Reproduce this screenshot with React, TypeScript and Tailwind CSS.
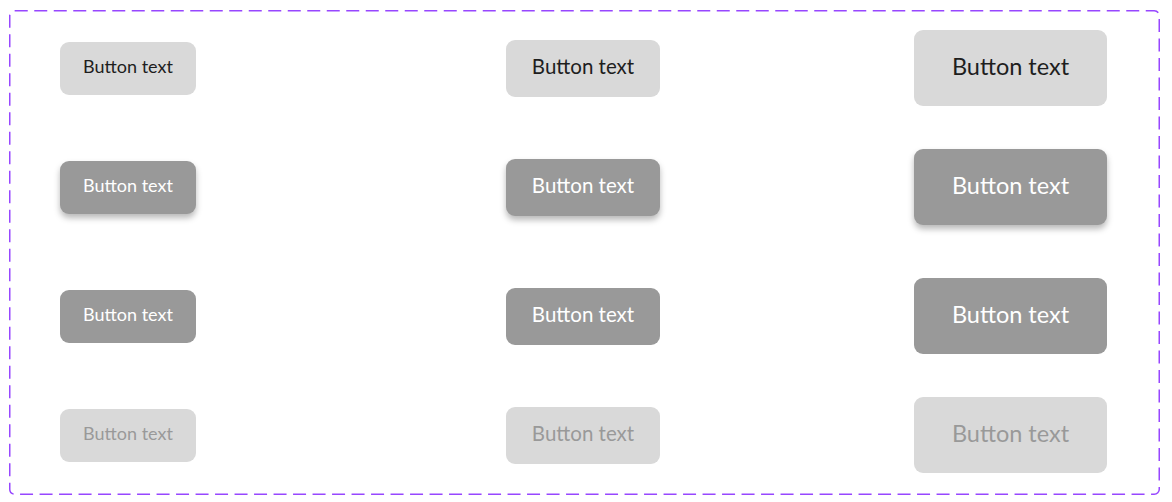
import React from "react"

type Variant = "light" | "raised" | "dark" | "disabled"
type Size = "sm" | "md" | "lg"

const variantClass: Record<Variant, string> = {
	light: "bg-[#d9d9d9] text-[#1e1e1e]",
	raised: "bg-[#999999] text-white shadow-[0_4px_6px_rgba(0,0,0,0.28)]",
	dark: "bg-[#999999] text-white",
	disabled: "bg-[#d9d9d9] text-[#999999]",
}

const sizeClass: Record<Size, string> = {
	sm: "w-[136px] h-[53px] text-[18px]",
	md: "w-[154px] h-[57px] text-[20.5px]",
	lg: "w-[193px] h-[76px] text-[23.5px]",
}

function DemoButton({ variant, size }: { variant: Variant; size: Size }) {
	return (
		<button className={`flex items-center justify-center rounded-[9px] pb-[3px] ${variantClass[variant]} ${sizeClass[size]}`}>
			Button text
		</button>
	)
}

const rows: { v: Variant; mt: string }[] = [
	{ v: "light", mt: "" },
	{ v: "raised", mt: "mt-[43px]" },
	{ v: "dark", mt: "mt-[53px]" },
	{ v: "disabled", mt: "mt-[43px]" },
]

export default function App() {
	return (
		<div className="bg-white w-[1172px] h-[502px] pl-[9px] pt-[10px]" style={{ fontFamily: "Lato, 'Noto Sans', sans-serif" }}>
			<div className="relative w-[1151px] h-[485px] pt-[20px] pl-[51px]">
				{/* dashed component-set frame */}
				<svg className="absolute inset-0 pointer-events-none" width="1151" height="485">
					<rect x="0.75" y="0.75" width="1149.5" height="483.5" rx="5" fill="none" stroke="#9747ff" strokeWidth="1.5" strokeDasharray="13 6.5" />
				</svg>
				<div className="flex flex-col">
					{rows.map(({ v, mt }) => (
						<div key={v} className={`flex h-[76px] items-center ${mt}`}>
							<DemoButton variant={v} size="sm" />
							<div className="ml-[310px]">
								<DemoButton variant={v} size="md" />
							</div>
							<div className="ml-[254px]">
								<DemoButton variant={v} size="lg" />
							</div>
						</div>
					))}
				</div>
			</div>
		</div>
	)
}
